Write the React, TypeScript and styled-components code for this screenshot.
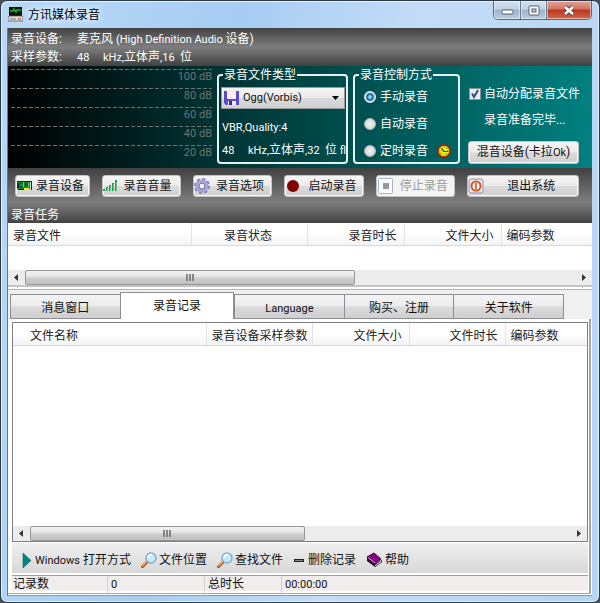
import React, { useState } from "react";
import styled, { createGlobalStyle, css } from "styled-components";

const GlobalStyle = createGlobalStyle`
  * { box-sizing: border-box; }
  html, body { margin: 0; padding: 0; }
  body, button, input, select {
    font-family: Roboto, "Noto Sans CJK SC", sans-serif;
    font-size: 12px;
    line-height: 16px;
  }
  body { background: #46505c; }
  button, select { color: #111; }
`;

const silver = "linear-gradient(#f4f4f4, #ebebeb 48%, #dadada 52%, #d0d0d0)";

const Latin = styled.span`
  font-size: 11px;
`;

const Window = styled.div`
  min-height: 100vh;
  display: flex;
  flex-direction: column;
  padding: 0 7px 6px 6px;
  border: 1px solid #2b3846;
  border-radius: 7px;
  background: linear-gradient(100deg, #b9d8f6, #a7cdf3 35%, #c3dcf7 60%, #b4d5f5);
  box-shadow: inset 0 0 0 1px #e4f2fd;
`;

const TitleBar = styled.header`
  height: 27px;
  display: flex;
  align-items: flex-start;
  gap: 5px;
`;

const Title = styled.h1`
  flex: 1;
  margin: 0;
  padding-top: 6px;
  font-size: 12px;
  font-weight: 400;
  line-height: 16px;
  color: #000;
  text-shadow: 0 0 6px #fff, 0 0 8px #fff;
`;

const AppIcon = styled.svg`
  margin: 5px 0 0 1px;
`;

const Caption = styled.div`
  display: flex;
  border: 1px solid #56687e;
  border-top: 0;
  border-radius: 0 0 5px 5px;
  overflow: hidden;
`;

const CaptionButton = styled.button<{ $close?: boolean }>`
  display: flex;
  align-items: center;
  justify-content: center;
  width: ${(p) => (p.$close ? 45 : 26)}px;
  height: 18px;
  padding: 0;
  border: 0;
  box-shadow: inset 0 0 0 1px rgba(255, 255, 255, 0.5);
  background: ${(p) =>
    p.$close
      ? "linear-gradient(#e3a397, #d27462 45%, #bb3320 50%, #d2684b)"
      : "linear-gradient(#d3e0ef, #c0d0e3 45%, #9db3cc 50%, #b9cde2)"};
  & + & { border-left: 1px solid #6a7c92; }
`;

const Client = styled.main`
  flex: 1;
  display: flex;
  flex-direction: column;
  border-left: 1px solid #6a7785;
  border-bottom: 1px solid #8b97a2;
  background: #fff;
`;

const InfoBar = styled.dl`
  margin: 0;
  padding: 2px 3px 0;
  height: 38px;
  display: grid;
  grid-template-columns: 66px 1fr;
  grid-auto-rows: 18px;
  align-items: center;
  color: #fff;
  background: linear-gradient(#424242, #7e7e7e 50%, #404040);
`;

const InfoText = styled.dd`
  margin: 0;
  white-space: pre;
`;

const Console = styled.section`
  display: flex;
  gap: 5px;
  height: 102px;
  padding: 1px 13px 4px 3px;
  color: #fff;
  background: linear-gradient(90deg, #000, #003030 33%, #008080);
`;

const Meter = styled.div`
  flex: 1;
  padding: 2px 0 0;
`;

const MeterRow = styled.div`
  height: 19px;
  font-size: 11px;
  text-align: right;
  color: #6d7474;
  background: repeating-linear-gradient(90deg, #6d7171 0 4px, transparent 4px 6px) 0 0 / 100% 1px no-repeat;
`;

const Group = styled.fieldset<{ $width: number }>`
  flex: none;
  width: ${(p) => p.$width}px;
  min-width: 0;
  margin: 0;
  padding: 0 3px;
  border: 2px solid #e6f0f0;
  border-radius: 4px;
  overflow: hidden;
`;

const Legend = styled.legend`
  height: 16px;
  margin-left: 1px;
  padding: 0 1px;
`;

const Combo = styled.div`
  display: flex;
  align-items: center;
  height: 22px;
  margin: 4px -2px 0 -1px;
  padding: 0 5px 0 2px;
  border: 1px solid #9a9a9a;
  background: ${silver};
`;

const ComboSelect = styled.select`
  flex: 1;
  min-width: 0;
  height: 20px;
  padding: 0 4px;
  border: 0;
  font-size: 11px;
  appearance: none;
  background: transparent;
`;

const Detail = styled.p<{ $top: number }>`
  margin: ${(p) => p.$top}px 0 0;
  white-space: pre;
`;

const Choice = styled.label`
  display: flex;
  align-items: center;
  gap: 4px;
  height: 27px;
  padding-left: 6px;
`;

const Radio = styled.input`
  appearance: none;
  width: 12px;
  height: 12px;
  margin: 0;
  border: 1px solid #b5baba;
  border-radius: 50%;
  background: radial-gradient(#f4f4f4, #c9cdcd);
  &:checked {
    border-color: #e8eeee;
    background: radial-gradient(circle, #7fe0ff 0 1px, #145d92 3px, #e8eeee 5px);
  }
`;

const ClockIcon = styled.svg`
  margin-left: 5px;
`;

const Side = styled.div`
  flex: none;
  width: 111px;
  margin-left: 3px;
  padding-top: 19px;
  display: flex;
  flex-direction: column;
`;

const CheckLabel = styled.label`
  display: flex;
  align-items: center;
  gap: 3px;
  margin-left: 1px;
  white-space: nowrap;
`;

const Check = styled.input`
  appearance: none;
  flex: none;
  width: 12px;
  height: 12px;
  margin: 0;
  border: 1px solid #8e9494;
  background: #e9eef2;
  &:checked {
    background: #e9eef2
      url("data:image/svg+xml,%3Csvg xmlns='http://www.w3.org/2000/svg' viewBox='0 0 10 10'%3E%3Cpath d='M2 4.5 4 8 8 1' fill='none' stroke='%2336489a' stroke-width='2'/%3E%3C/svg%3E");
  }
`;

const Ready = styled.p`
  margin: 10px 0 13px 16px;
`;

const raised = css`
  border: 1px solid #c2c2c2;
  border-radius: 3px;
  background: ${silver};
  box-shadow: inset 0 0 0 1px #f6f6f6;
`;

const MixButton = styled.button`
  ${raised}
  height: 23px;
  padding: 0;
  white-space: nowrap;
`;

const TaskArea = styled.section`
  height: 55px;
  display: flex;
  flex-direction: column;
  justify-content: space-between;
  padding: 7px 13px 0 3px;
  color: #fff;
  background: linear-gradient(#404040, #7e7e7e 62%, #424242);
`;

const Buttons = styled.div`
  display: flex;
  gap: 12px;
  padding-left: 4px;
`;

const ToolButton = styled.button<{ $gap: number; $grow: number }>`
  ${raised}
  flex: ${(p) => p.$grow} 1 0;
  height: 22px;
  display: flex;
  align-items: center;
  gap: ${(p) => p.$gap}px;
  padding: 0;
  white-space: nowrap;
  &:disabled {
    color: #999;
    background: #f3f3f3;
  }
`;

const SectionTitle = styled.h2`
  margin: 0;
  font-size: 12px;
  line-height: 16px;
  font-weight: 400;
`;

const Table = styled.table`
  width: 100%;
  table-layout: fixed;
  border-collapse: collapse;
`;

const Head = styled.th<{ $width?: number; $align: string; $indent?: number }>`
  width: ${(p) => (p.$width ? `${p.$width}px` : "auto")};
  height: 22px;
  padding: 4px 7px 0 ${(p) => p.$indent ?? 5}px;
  border-right: 1px solid #e2e3e4;
  border-bottom: 1px solid #d8dadc;
  font-weight: 400;
  text-align: ${(p) => p.$align};
  white-space: nowrap;
  color: #222;
  background: linear-gradient(#fff 45%, #f3f4f6);
  &:last-child { border-right: 0; }
`;

const TaskList = styled.div`
  height: 64px;
  display: flex;
  flex-direction: column;
  justify-content: space-between;
  border-bottom: 2px solid #c4c4c4;
  margin-bottom: 2px;
`;

const ScrollTrack = styled.div`
  display: flex;
  height: 15px;
  background: #ececec;
`;

const ScrollArrow = styled.button`
  display: flex;
  align-items: center;
  justify-content: center;
  width: 17px;
  padding: 0;
  border: 0;
  background: transparent;
`;

const ScrollRun = styled.div`
  flex: 1;
  display: flex;
`;

const Thumb = styled.div<{ $share: number }>`
  width: ${(p) => p.$share}%;
  display: flex;
  align-items: center;
  justify-content: center;
  border: 1px solid #969696;
  border-radius: 2px;
  background: linear-gradient(#f3f3f3, #e2e2e2 48%, #cdcdcd 52%, #c2c2c2);
`;

const Tabs = styled.div`
  display: flex;
  align-items: flex-end;
  height: 30px;
  padding: 0 28px 0 2px;
  border-top: 1px solid #b5b5b5;
  background: #f0f0f0;
`;

const Tab = styled.button<{ $active: boolean }>`
  flex: ${(p) => (p.$active ? 114 : 110)} 1 0;
  height: ${(p) => (p.$active ? 27 : 25)}px;
  padding: ${(p) => (p.$active ? 0 : 3)}px 0 0;
  border: 1px solid #8c8e94;
  border-right-width: ${(p) => (p.$active ? 1 : 0)}px;
  border-bottom-width: ${(p) => (p.$active ? 0 : 1)}px;
  background: ${(p) => (p.$active ? "#fff" : silver)};
  &:last-child { border-right-width: 1px; }
`;

const Panel = styled.section`
  flex: 1;
  display: flex;
  flex-direction: column;
  margin: 0 1px 1px 0;
  padding: 3px 1px 0 4px;
  border-right: 2px solid #a5a5a5;
  border-bottom: 1px solid #a5a5a5;
`;

const Records = styled.div`
  flex: 1;
  display: flex;
  flex-direction: column;
  justify-content: space-between;
  border: 1px solid #7c7f84;
`;

const Actions = styled.div`
  display: flex;
  align-items: center;
  height: 30px;
  margin: 1px 0 2px;
  padding: 4px 10px 0;
  gap: 10px;
  background: linear-gradient(#efefef, #d8d8d8);
`;

const Action = styled.button`
  display: flex;
  align-items: center;
  gap: 2px;
  padding: 0;
  border: 0;
  background: transparent;
  white-space: nowrap;
`;

const Status = styled.footer`
  display: grid;
  grid-template-columns: 95px 97px 77px 1fr;
  height: 16px;
  margin-bottom: 2px;
  border-top: 1px solid #a0a0a0;
  background: #f1edec;
`;

const StatusCell = styled.span`
  padding: 0 4px 0 1px;
  line-height: 16px;
  color: #111;
  & + & {
    padding-left: 3px;
    border-left: 1px solid #d4d0cf;
  }
`;

function FloppyIcon() {
  return (
    <svg width="15" height="16" viewBox="0 0 15 16" aria-hidden="true">
      <path d="M0 1h15v14H2l-2-2z" fill="#5b4bc8" />
      <path d="M3 1h9v8H3z" fill="#fbeefa" />
      <path d="M4 11h8v4H4z" fill="#eef" />
      <path d="M5 11h3v4H5z" fill="#3a2c96" />
    </svg>
  );
}

function CardIcon() {
  return (
    <svg width="17" height="14" viewBox="0 0 17 14" aria-hidden="true">
      <path d="M1 2h13v8H1z" fill="#0d8a1d" />
      <path d="M1 2h14v1H1zM15 2h1v9h-1zM1 4h2v5H1z" fill="#222" />
      <path d="M4 4h3v2H4zM9 4h3v3H9zM4 7h2v2H4z" fill="#053" />
      <path d="M5 5h1v1H5zM12 4h1v4h-1zM7 3h1v5H7z" fill="#57e36b" />
      <path d="M2 10h6v1H2z" fill="#111" />
      <path d="M8 9h5v2H8z" fill="#f2ee16" />
    </svg>
  );
}

function VolumeIcon() {
  return (
    <svg width="15" height="14" viewBox="0 0 15 14" aria-hidden="true">
      <path d="M0 10h2v2H0zM3 8h2v4H3zM6 6h2v6H6zM9 4h2v8H9zM12 1h2v11h-2z" fill="#1f9c50" />
      <path d="M4 9h1v3H4zM7 7h1v5H7zM10 5h1v7h-1zM13 3h1v9h-1z" fill="#6cc48c" />
    </svg>
  );
}

function GearIcon() {
  return (
    <svg width="16" height="16" viewBox="0 0 16 16" aria-hidden="true">
      <circle cx="8" cy="8" r="7" fill="none" stroke="#7778b5" strokeWidth="2" strokeDasharray="3 2.5" />
      <circle cx="8" cy="8" r="5" fill="none" stroke="#a3a4d8" strokeWidth="3.5" />
      <circle cx="8" cy="8" r="3" fill="#f0f0f5" stroke="#6d6ea8" />
    </svg>
  );
}

function StopIcon() {
  return (
    <svg width="17" height="18" viewBox="0 0 17 18" aria-hidden="true">
      <rect x="1.500" y="1.500" width="14" height="15" rx="1" fill="#fff" stroke="#9fb4d0" />
      <path d="M6 6h6v6H6z" fill="#999" />
    </svg>
  );
}

function PowerIcon() {
  return (
    <svg width="16" height="16" viewBox="0 0 16 16" aria-hidden="true">
      <rect x="1" y="1" width="14" height="14" rx="2" fill="#e6e2ee" stroke="#9690b0" />
      <circle cx="8" cy="8" r="4.500" fill="#fff" stroke="#dd5520" strokeWidth="2" />
      <path d="M8 5v6" stroke="#cc4414" strokeWidth="1.500" />
    </svg>
  );
}

function MagnifierIcon() {
  return (
    <svg width="16" height="16" viewBox="0 0 16 16" aria-hidden="true">
      <path d="M1.500 14.500 6 10" stroke="#8f4a28" strokeWidth="3" strokeLinecap="round" />
      <path d="M1.500 13.500 5.500 9.800" stroke="#f1a65e" strokeWidth="2" strokeLinecap="round" />
      <circle cx="10" cy="6" r="5" fill="#c2ecfd" stroke="#8ba7d2" strokeWidth="1.500" />
      <path d="M7 6a3 3 0 0 1 4-3" fill="none" stroke="#fff" strokeWidth="2" />
    </svg>
  );
}

function BookIcon() {
  return (
    <svg width="17" height="16" viewBox="0 0 17 16" aria-hidden="true">
      <path d="M1 5v4l8 6 7-5V8L9 12z" fill="#2b0a2d" />
      <path d="M9 13l6-4v1l-6 4z" fill="#eee" />
      <path d="M1 5 8 1l7 6-6 5z" fill="#850685" stroke="#3b073d" />
      <path d="M2 5.500 9 11" stroke="#e4a7e2" />
    </svg>
  );
}

function ClockFace() {
  return (
    <ClockIcon width="14" height="14" viewBox="0 0 14 14" aria-hidden="true">
      <circle cx="7" cy="7" r="6" fill="#f1ee10" stroke="#c41408" strokeWidth="1.500" />
      <circle cx="7" cy="7" r="4" fill="none" stroke="#2e7a12" strokeWidth="1.200" strokeDasharray="1 2" />
      <path d="M7 7.500H11M7 7.500 4.500 4.500" stroke="#263" strokeWidth="1.200" />
    </ClockIcon>
  );
}

function Scrollbar({ share }: { share: number }) {
  return (
    <ScrollTrack>
      <ScrollArrow aria-label="向左">
        <svg width="5" height="7" viewBox="0 0 5 7"><path d="M4 0v7L0 3.500z" fill="#333" /></svg>
      </ScrollArrow>
      <ScrollRun>
        <Thumb $share={share}>
          <svg width="9" height="7" viewBox="0 0 9 7"><path d="M0 0h2v7H0zM3 0h2v7H3zM6 0h2v7H6z" fill="#858585" /></svg>
        </Thumb>
      </ScrollRun>
      <ScrollArrow aria-label="向右">
        <svg width="5" height="7" viewBox="0 0 5 7"><path d="M1 0v7l4-3.500z" fill="#333" /></svg>
      </ScrollArrow>
    </ScrollTrack>
  );
}

type Column = { name: string; width?: number; align: string; indent?: number };

const taskColumns: Column[] = [
  { name: "录音文件", width: 183, align: "left" },
  { name: "录音状态", width: 116, align: "center" },
  { name: "录音时长", width: 97, align: "right" },
  { name: "文件大小", width: 97, align: "right" },
  { name: "编码参数", align: "left" },
];

const recordColumns: Column[] = [
  { name: "文件名称", width: 193, align: "left", indent: 17 },
  { name: "录音设备采样参数", width: 106, align: "center" },
  { name: "文件大小", width: 97, align: "right" },
  { name: "文件时长", width: 96, align: "right" },
  { name: "编码参数", align: "left" },
];

function ListHeader({ columns }: { columns: Column[] }) {
  return (
    <Table>
      <thead>
        <tr>
          {columns.map((c) => (
            <Head key={c.name} scope="col" $width={c.width} $align={c.align} $indent={c.indent}>
              {c.name}
            </Head>
          ))}
        </tr>
      </thead>
    </Table>
  );
}

const tabs = ["消息窗口", "录音记录", <Latin>Language</Latin>, "购买、注册", "关于软件"];
const modes = ["手动录音", "自动录音", "定时录音"];

export default function App() {
  const [tab, setTab] = useState(1);
  const [mode, setMode] = useState(0);
  const [auto, setAuto] = useState(true);

  return (
    <>
      <GlobalStyle />
      <Window>
        <TitleBar>
          <AppIcon width="15" height="16" viewBox="0 0 15 16" aria-hidden="true">
            <path d="M1 1h13v9H1z" fill="#0a160c" />
            <path d="M2 5h3l1-2 2 3 1-2h4" fill="none" stroke="#24b52b" strokeWidth="1.500" />
            <path d="M1 10h13l1 2v3H0v-3z" fill="#dcdcdc" stroke="#555" strokeWidth=".7" />
            <path d="M2 13h6" stroke="#777" />
            <path d="M10 13h3" stroke="#d22" />
          </AppIcon>
          <Title>方讯媒体录音</Title>
          <Caption>
            <CaptionButton aria-label="最小化">
              <svg width="13" height="12" viewBox="0 0 13 12"><rect x="1" y="6" width="11" height="4" rx="1" fill="#fff" stroke="#56606e" /></svg>
            </CaptionButton>
            <CaptionButton aria-label="最大化">
              <svg width="12" height="11" viewBox="0 0 12 11">
                <rect x="1" y="1" width="10" height="9" rx="1" fill="#fff" stroke="#56606e" />
                <rect x="4" y="4" width="4" height="3" fill="#b9cade" stroke="#56606e" />
              </svg>
            </CaptionButton>
            <CaptionButton $close aria-label="关闭">
              <svg width="12" height="11" viewBox="0 0 12 11">
                <path d="M2 2l8 7M10 2 2 9" stroke="#5d4448" strokeWidth="4.500" />
                <path d="M2 2l8 7M10 2 2 9" stroke="#fff" strokeWidth="2.500" />
              </svg>
            </CaptionButton>
          </Caption>
        </TitleBar>

        <Client>
          <InfoBar>
            <dt>录音设备:</dt>
            <InfoText>麦克风 <Latin>(High Definition Audio </Latin>设备)</InfoText>
            <dt>采样参数:</dt>
            <InfoText><Latin>{"48     kHz,"}</Latin>立体声<Latin>{",16  "}</Latin>位</InfoText>
          </InfoBar>

          <Console>
            <Meter>
              {[100, 80, 60, 40, 20].map((db) => (
                <MeterRow key={db}>{db} dB</MeterRow>
              ))}
            </Meter>
            <Group $width={131}>
              <Legend>录音文件类型</Legend>
              <Combo>
                <FloppyIcon />
                <ComboSelect aria-label="录音文件类型" defaultValue="ogg">
                  <option value="ogg">Ogg(Vorbis)</option>
                </ComboSelect>
                <svg width="7" height="4" viewBox="0 0 7 4" aria-hidden="true"><path d="M0 0h7L3.500 4z" fill="#000" /></svg>
              </Combo>
              <Detail $top={10}><Latin>VBR,Quality:4</Latin></Detail>
              <Detail $top={6}><Latin>{"48     kHz,"}</Latin>立体声<Latin>{",32  "}</Latin>位<Latin> float</Latin></Detail>
            </Group>
            <Group $width={107}>
              <Legend>录音控制方式</Legend>
              {modes.map((name, i) => (
                <Choice key={name}>
                  <Radio type="radio" name="mode" checked={mode === i} onChange={() => setMode(i)} />
                  {name}
                  {i === 2 && <ClockFace />}
                </Choice>
              ))}
            </Group>
            <Side>
              <CheckLabel>
                <Check type="checkbox" checked={auto} onChange={(e) => setAuto(e.target.checked)} />
                自动分配录音文件
              </CheckLabel>
              <Ready>录音准备完毕...</Ready>
              <MixButton>混音设备(卡拉<Latin>Ok</Latin>)</MixButton>
            </Side>
          </Console>

          <TaskArea>
            <Buttons>
              <ToolButton $grow={74} $gap={3}><CardIcon />录音设备</ToolButton>
              <ToolButton $grow={79} $gap={6}><VolumeIcon />录音音量</ToolButton>
              <ToolButton $grow={79} $gap={6}><GearIcon />录音选项</ToolButton>
              <ToolButton $grow={79} $gap={8}>
                <svg width="15" height="14" viewBox="0 0 15 14" aria-hidden="true"><circle cx="8" cy="7" r="6" fill="#820000" /></svg>
                启动录音
              </ToolButton>
              <ToolButton $grow={79} $gap={6} disabled><StopIcon />停止录音</ToolButton>
              <ToolButton $grow={112} $gap={23}><PowerIcon />退出系统</ToolButton>
            </Buttons>
            <SectionTitle>录音任务</SectionTitle>
          </TaskArea>

          <TaskList>
            <ListHeader columns={taskColumns} />
            <Scrollbar share={60} />
          </TaskList>

          <Tabs role="tablist">
            {tabs.map((name, i) => (
              <Tab key={i} role="tab" aria-selected={tab === i} $active={tab === i} onClick={() => setTab(i)}>
                {name}
              </Tab>
            ))}
          </Tabs>

          <Panel role="tabpanel">
            <Records>
              <ListHeader columns={recordColumns} />
              <Scrollbar share={51} />
            </Records>
            <Actions>
              <Action>
                <svg width="11" height="15" viewBox="0 0 11 15" aria-hidden="true"><path d="M1 0 9 7.500 1 15z" fill="#008585" stroke="#055" strokeWidth=".5" /></svg>
                <span><Latin>Windows</Latin> 打开方式</span>
              </Action>
              <Action><MagnifierIcon />文件位置</Action>
              <Action><MagnifierIcon />查找文件</Action>
              <Action>
                <svg width="13" height="15" viewBox="0 0 13 15" aria-hidden="true"><path d="M1 6h10v3H1z" fill="#222" /><path d="M2 7h8v1H2z" fill="#888" /></svg>
                删除记录
              </Action>
              <Action><BookIcon />帮助</Action>
            </Actions>
            <Status>
              <StatusCell>记录数</StatusCell>
              <StatusCell><Latin>0</Latin></StatusCell>
              <StatusCell>总时长</StatusCell>
              <StatusCell><Latin>00:00:00</Latin></StatusCell>
            </Status>
          </Panel>
        </Client>
      </Window>
    </>
  );
}
